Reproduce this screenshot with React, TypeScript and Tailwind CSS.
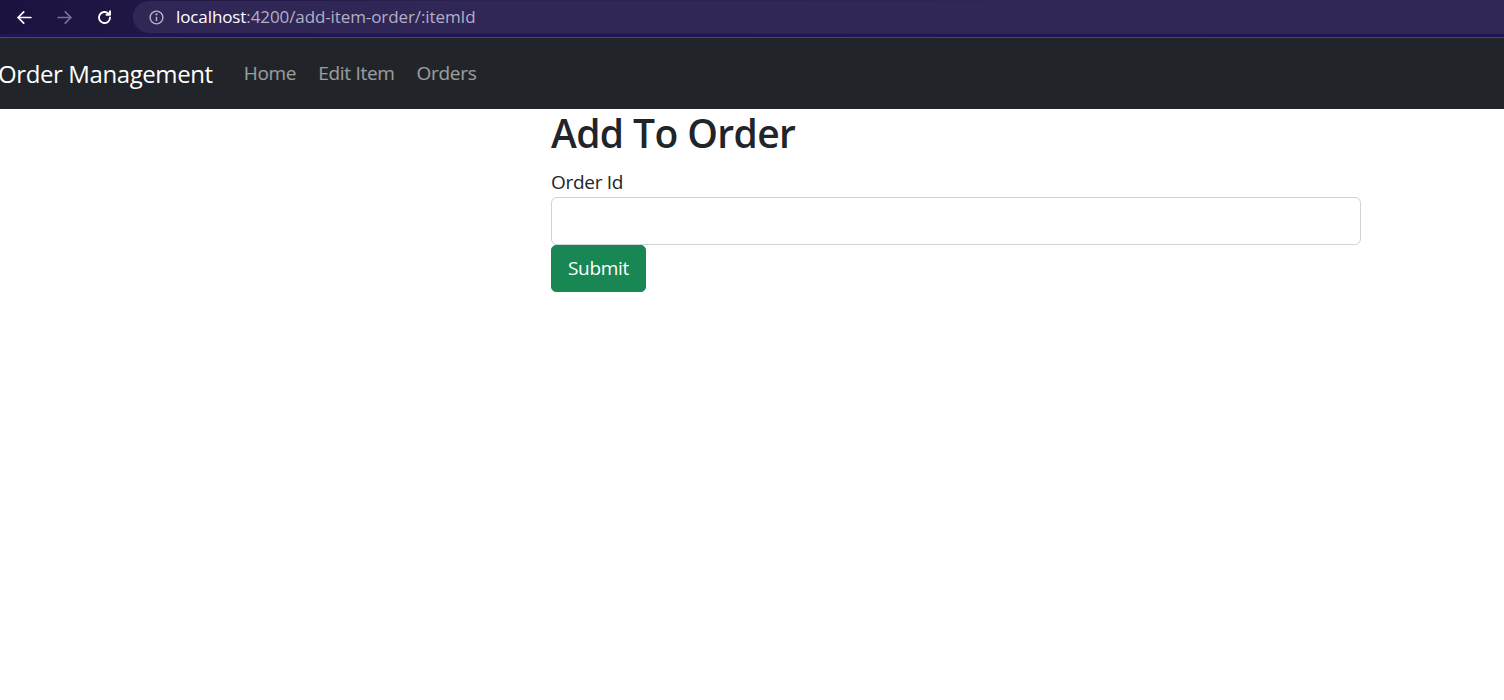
import React from 'react';

// Browser toolbar strip on top of the page screenshot
function BrowserBar() {
  return (
    <div className="h-[38px] bg-[linear-gradient(90deg,#1b1240,#2a2150_30%,#2f2757)] flex flex-col">
      <div className="flex-1 flex items-center">
        <div className="flex items-center gap-[21px] pl-[15px] pr-[19px]">
          {/* back */}
          <svg width="19" height="19" viewBox="0 0 24 24" fill="none" stroke="#ffffff" strokeWidth="2.2" strokeLinecap="round" strokeLinejoin="round">
            <line x1="20" y1="12" x2="4" y2="12" />
            <polyline points="11 5 4 12 11 19" />
          </svg>
          {/* forward */}
          <svg width="19" height="19" viewBox="0 0 24 24" fill="none" stroke="#77728f" strokeWidth="2.2" strokeLinecap="round" strokeLinejoin="round">
            <line x1="4" y1="12" x2="20" y2="12" />
            <polyline points="13 5 20 12 13 19" />
          </svg>
          {/* reload */}
          <svg width="19" height="19" viewBox="0 0 24 24" fill="none" stroke="#ffffff" strokeWidth="2.4" strokeLinecap="round" strokeLinejoin="round">
            <path d="M19 12a7 7 0 1 1-2.05-4.95" />
            <polyline points="19 4 19 8.5 14.5 8.5" fill="#ffffff" />
          </svg>
        </div>
        <div className="flex-1 h-[32px] rounded-l-full bg-[#302757] flex items-center pl-[15px]">
          <svg width="17" height="17" viewBox="0 0 24 24" fill="none" stroke="#b9b5c9" strokeWidth="2">
            <circle cx="12" cy="12" r="9" />
            <line x1="12" y1="11" x2="12" y2="17" />
            <circle cx="12" cy="7.5" r="0.6" fill="#b9b5c9" />
          </svg>
          <span className="ml-[11px] text-[17px] font-['Open_Sans',sans-serif] tracking-[-0.1px]">
            <span className="text-white">localhost</span>
            <span className="text-[#b3afc6]">:4200/add-item-order/:itemId</span>
          </span>
        </div>
      </div>
      <div className="h-[3px] bg-[#1f1552]" />
      <div className="h-px bg-[#4a4a5a]" />
    </div>
  );
}

export default function App() {
  return (
    <div className="min-h-[700px] bg-white font-['Open_Sans','Noto_Sans',sans-serif] text-[#212529]">
      <BrowserBar />

      {/* Navbar */}
      <nav className="h-[71px] bg-[#212529] flex items-center">
        <a className="-ml-[2px] mr-[31px] text-[24px] text-white tracking-[-0.4px]">Order Management</a>
        <div className="flex items-center gap-[22px] text-[19px] text-white/55 tracking-[-0.3px]">
          <a>Home</a>
          <a>Edit Item</a>
          <a>Orders</a>
        </div>
      </nav>

      {/* Form */}
      <div className="pl-[551px]">
        <div className="w-[810px]">
          <h1 className="text-[39px] font-semibold leading-[48px] mb-[10px] tracking-[-0.6px]">Add To Order</h1>
          <label className="block text-[19px] leading-[30px] tracking-[-0.3px]">Order Id</label>
          <input className="block w-full h-[48px] border border-[#ced4da] rounded-[6px] px-4 text-[20px] outline-none" />
          <button className="h-[47px] w-[95px] bg-[#198754] text-white text-[19px] rounded-[5px] border border-[#198754] tracking-[-0.3px]">
            Submit
          </button>
        </div>
      </div>
    </div>
  );
}
